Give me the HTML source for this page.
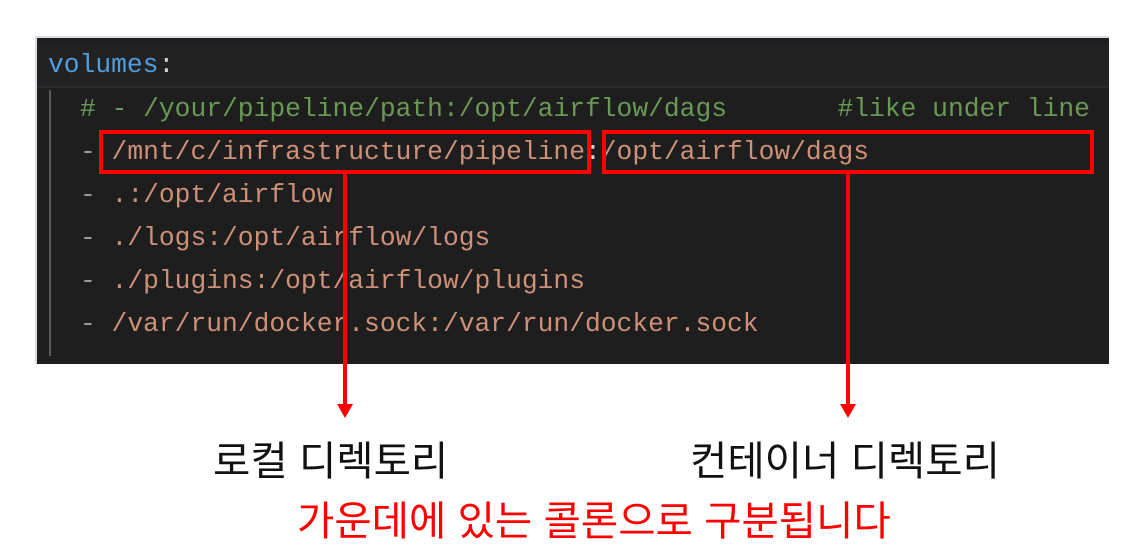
<!DOCTYPE html>
<html><head><meta charset="utf-8"><style>
body{margin:0;width:1134px;height:559px;background:#fff;position:relative;overflow:hidden}
.panel{position:absolute;left:35px;top:36px;width:1072px;height:326px;background:#1e1e1e;border-top:2px solid #d8dde6;border-left:2px solid #d8dde6}
.hdr{position:absolute;left:0;top:6px;width:100%;height:42px;background:#222;border-bottom:2px solid #2a2a2a}
.guide{position:absolute;left:12px;top:52px;width:2px;height:266px;background:#5a5a5a}
.code{position:absolute;font-family:"Liberation Mono",monospace;font-size:26.3px;white-space:pre;line-height:43px;color:#ce9178}
.g{color:#6a9955}.b{color:#4f9fe0}.d{color:#9a9a9a}.w{color:#d4d4d4}
.box{position:absolute;border:4px solid #f00;box-sizing:border-box}
.v{position:absolute;width:4px;background:#f00}
.ah{position:absolute;width:0;height:0;border-left:8px solid transparent;border-right:8px solid transparent;border-top:14px solid #f00}
.lbl{position:absolute;font-family:"Liberation Sans","Noto Sans CJK KR",sans-serif;font-size:40.6px;color:#111;white-space:nowrap}
</style></head><body>
<div class="panel"><div class="hdr"></div><div class="guide"></div></div>
<div class="code" style="left:48px;top:44px"><span class="b">volumes</span><span class="w">:</span></div>
<div class="code" style="left:80px;top:88px"><span class="g"># - /your/pipeline/path:/opt/airflow/dags       #like under line</span>
<span class="d">-</span> /mnt/c/infrastructure/pipeline<span class="w">:</span>/opt/airflow/dags
<span class="d">-</span> .:/opt/airflow
<span class="d">-</span> ./logs:/opt/airflow/logs
<span class="d">-</span> ./plugins:/opt/airflow/plugins
<span class="d">-</span> /var/run/docker.sock:/var/run/docker.sock</div>
<div class="box" style="left:99px;top:130px;width:492px;height:44px"></div>
<div class="box" style="left:602px;top:130px;width:492px;height:44px"></div>
<div class="v" style="left:343px;top:174px;height:232px"></div>
<div class="ah" style="left:337px;top:404px"></div>
<div class="v" style="left:846px;top:174px;height:232px"></div>
<div class="ah" style="left:840px;top:404px"></div>
<div class="lbl" style="left:213px;top:428px">로컬 디렉토리</div>
<div class="lbl" style="left:690px;top:428px">컨테이너 디렉토리</div>
<div class="lbl" style="left:297px;top:488px;color:#f00">가운데에 있는 콜론으로 구분됩니다</div>
</body></html>
